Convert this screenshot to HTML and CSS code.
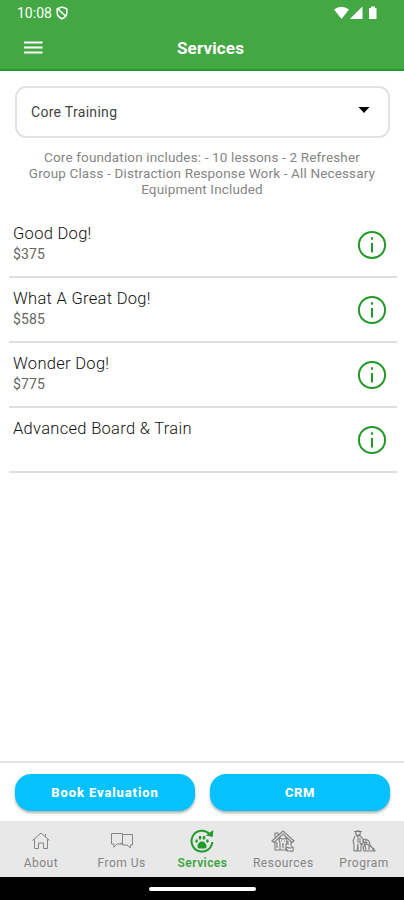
FILE: index.html
```
<!DOCTYPE html>
<html lang="en">
<head>
<meta charset="utf-8">
<title>Services</title>
<link rel="stylesheet" href="styles.css">
</head>
<body>
<div class="app">
  <header class="header">
    <div class="status">
      <span class="time">10:08</span>
      <svg class="shield" width="12" height="14" viewBox="0 0 12 14" fill="none" stroke="currentColor" stroke-width="1.5"><path d="M1.2 2.7 6 1l4.8 1.7v4.1c0 2.7-2 4.8-4.8 6-2.800-1.200-4.800-3.300-4.800-6zM2 3l8 7.500"/></svg>
      <svg class="signals" width="44" height="14" viewBox="0 0 44 14" fill="currentColor"><path d="M0 3.500Q7.500-2 15 3.500L7.500 13zM15.800 13 28.500.500V13z"/><path d="M37 .500h4V2h1.500v11h-7.500V2H37z"/></svg>
    </div>
    <div class="titlebar">
      <svg class="menu" width="20" height="14" viewBox="0 0 20 14" stroke="currentColor" stroke-width="2"><path d="M0 1.500h18.500M0 6.500h18.500M0 11.500h18.500"/></svg>
      <h1 class="title">Services</h1>
    </div>
  </header>
  <main class="content">
    <div class="select"><span>Core Training</span><svg width="12" height="6" viewBox="0 0 12 6"><path d="M.500 0h11L6 6z"/></svg></div>
    <p class="description">Core foundation includes: - 10 lessons - 2 Refresher<br>Group Class - Distraction Response Work - All Necessary<br>Equipment Included</p>
    <ul class="services">
      <li class="service"><div><div class="name">Good Dog!</div><div class="price">$375</div></div><svg class="info" viewBox="0 0 30 30"><circle cx="15" cy="15" r="13.100"/><path d="M15 13v9.500M15 7.200v2.600"/></svg></li>
      <li class="service"><div><div class="name">What A Great Dog!</div><div class="price">$585</div></div><svg class="info" viewBox="0 0 30 30"><circle cx="15" cy="15" r="13.100"/><path d="M15 13v9.500M15 7.200v2.600"/></svg></li>
      <li class="service"><div><div class="name">Wonder Dog!</div><div class="price">$775</div></div><svg class="info" viewBox="0 0 30 30"><circle cx="15" cy="15" r="13.100"/><path d="M15 13v9.500M15 7.200v2.600"/></svg></li>
      <li class="service"><div><div class="name">Advanced Board &amp; Train</div></div><svg class="info" viewBox="0 0 30 30"><circle cx="15" cy="15" r="13.100"/><path d="M15 13v9.500M15 7.200v2.600"/></svg></li>
    </ul>
  </main>
  <div class="actions"><button class="action">Book Evaluation</button><button class="action crm">CRM</button></div>
  <nav class="tabs">
    <div class="tab"><svg width="26" height="26" viewBox="0 0 26 26"><path d="m4.500 12.500 8.500-7.500 8.500 7.500M6.500 11.200v9.300h4v-5.500h5v5.500h4v-9.300M17.500 6v3"/></svg><span>About</span></div>
    <div class="tab"><svg width="26" height="26" viewBox="0 0 26 26"><path d="M12.500 16H8l-3.200 3.200V16H2.500V5.500h11V14l-2 2zM13.500 6.500h10V17h-2.200v3L18 17h-4.500v-3"/></svg><span>From Us</span></div>
    <div class="tab active"><svg width="26" height="26" viewBox="0 0 26 26"><path class="ring" d="M20.500 6A10.400 10.400 0 1 0 23.300 14"/><path class="solid" d="m24.300 2-.500 7-7-1.500zM8.500 18.500c0-2.900 2.200-5 4.500-5s4.500 2.100 4.500 5c0 2.500-2.200 2-4.500 2s-4.500.500-4.500-2z"/><g class="solid"><ellipse cx="7.600" cy="13" rx="1.300" ry="1.800"/><ellipse cx="11" cy="9.800" rx="1.400" ry="2"/><ellipse cx="15" cy="9.800" rx="1.400" ry="2"/><ellipse cx="18.400" cy="13" rx="1.300" ry="1.800"/></g></svg><span>Services</span></div>
    <div class="tab"><svg width="26" height="26" viewBox="0 0 26 26"><g class="dense"><path d="M2 13 13 3l11 10-2 1.500L13 6l-9 8.500zM5 13.500V22h13M21 14v4M5 9V5h3v2M10 22v-7l-1-3 1-2 2 1h2l2-1 1 3-1 4v5M11 13h1m2 0h1M12 16h2M13 16v4M7 14v6M18 13v4"/><path d="M16 21c0-2 2-2 3-1h2c1-2 3-1 2 1 1 2-1 3-2 2h-3c-1 0-2 0-2-2z"/></g></svg><span>Resources</span></div>
    <div class="tab"><svg width="26" height="26" viewBox="0 0 26 26"><g class="dense"><circle cx="7" cy="5" r="2.300"/><path d="M3 3.500h8M5 8l4-.500 3 3.500v4l-2 1v7H7v-7l-1 7H3v-7L2 13l2-5M7 8v7M9 10v5l3 2M12 12l3-1 3 2 1 4 3 4v2h-9l-1-4 2-3zM14 14l2 1-2 3 1 4M16 16l2 1v5M19 18l4 3 1 2h-5M15 12v2"/></g></svg><span>Program</span></div>
  </nav>
  <div class="system"><div class="home"></div></div>
</div>
</body>
</html>
```
FILE: styles.css
```
* { box-sizing: border-box; }
body { margin: 0; background: #fff; font-family: Roboto, "Liberation Sans", sans-serif; }
.app { width: 404px; height: 900px; display: flex; flex-direction: column; overflow: hidden; }
.header { height: 71px; flex: none; background: #43a843; color: #fff; border-bottom: 2px solid #229b29; }
.status { display: flex; height: 25px; padding: 0 26px 0 17px; align-items: center; }
.time { font-size: 14px; width: 35px; white-space: nowrap; }
.shield { margin-left: 4px; }
.signals { margin-left: auto; }
.titlebar { height: 46px; display: grid; grid-template-columns: 60px 1fr 60px; align-items: center; }
.menu { margin-left: 24px; }
.title { margin: 0; padding-left: 17px; text-align: center; font-size: 17px; line-height: 20px; font-weight: 700; letter-spacing: .150px; }
.content { flex: 1; }
.select { height: 52px; margin: 15px 14px 0 15px; border: 2px solid #e2e2e2; border-radius: 11px; padding: 0 18px 0 14px; display: flex; align-items: center; justify-content: space-between; font-size: 14px; color: #444; letter-spacing: .300px; }
.select svg { margin-bottom: 5px; }
.description { margin: 11px 0 0; text-align: center; font-size: 13.500px; line-height: 16px; color: #858585; white-space: nowrap; letter-spacing: .150px; }
.services { margin: 16px 7px 0 9px; padding: 0; list-style: none; }
.service { height: 65px; padding: 10px 10px 0 4px; border-bottom: 2px solid #dedede; display: flex; justify-content: space-between; }
.name { font-size: 16.500px; line-height: 22px; letter-spacing: .300px; color: #111; font-weight: 300; }
.price { font-size: 14px; line-height: 19px; color: #666; letter-spacing: .100px; }
.info { width: 30px; height: 30px; margin-top: 7px; fill: none; stroke: #23992a; stroke-width: 2; }
.actions { height: 60px; flex: none; border-top: 2px solid #e4e4e4; padding: 11px 14px 0 15px; display: flex; gap: 15px; }
.action { flex: 1; height: 37px; border: 0; border-radius: 16px; background: #05c1ff; color: #fff; font-family: inherit; font-size: 13px; font-weight: 800; letter-spacing: .880px; padding: 0; box-shadow: 0 2px 3px #a8b0b4; }
.crm { letter-spacing: .500px; }
.tabs { height: 56px; flex: none; background: #e8e8e8; display: grid; grid-template-columns: repeat(5, 1fr); }
.tab { display: flex; flex-direction: column; align-items: center; padding: 7px 0 0 1px; color: #858585; font-size: 12px; line-height: 16px; letter-spacing: .500px; }
.tab svg { fill: none; stroke: currentColor; stroke-width: 1; margin-bottom: 1px; }
.tab.active { color: #3ba441; font-weight: 600; letter-spacing: .450px; }
.tab .ring { stroke: #239b2b; stroke-width: 2; }
.tab .solid { fill: #239b2b; stroke: none; }
.dense { stroke: #7d7d7d; stroke-width: 1.100; }
.system { height: 23px; flex: none; background: #000; display: flex; justify-content: center; padding-top: 10px; }
.home { width: 107px; height: 4px; border-radius: 2px; background: #fff; }
```
